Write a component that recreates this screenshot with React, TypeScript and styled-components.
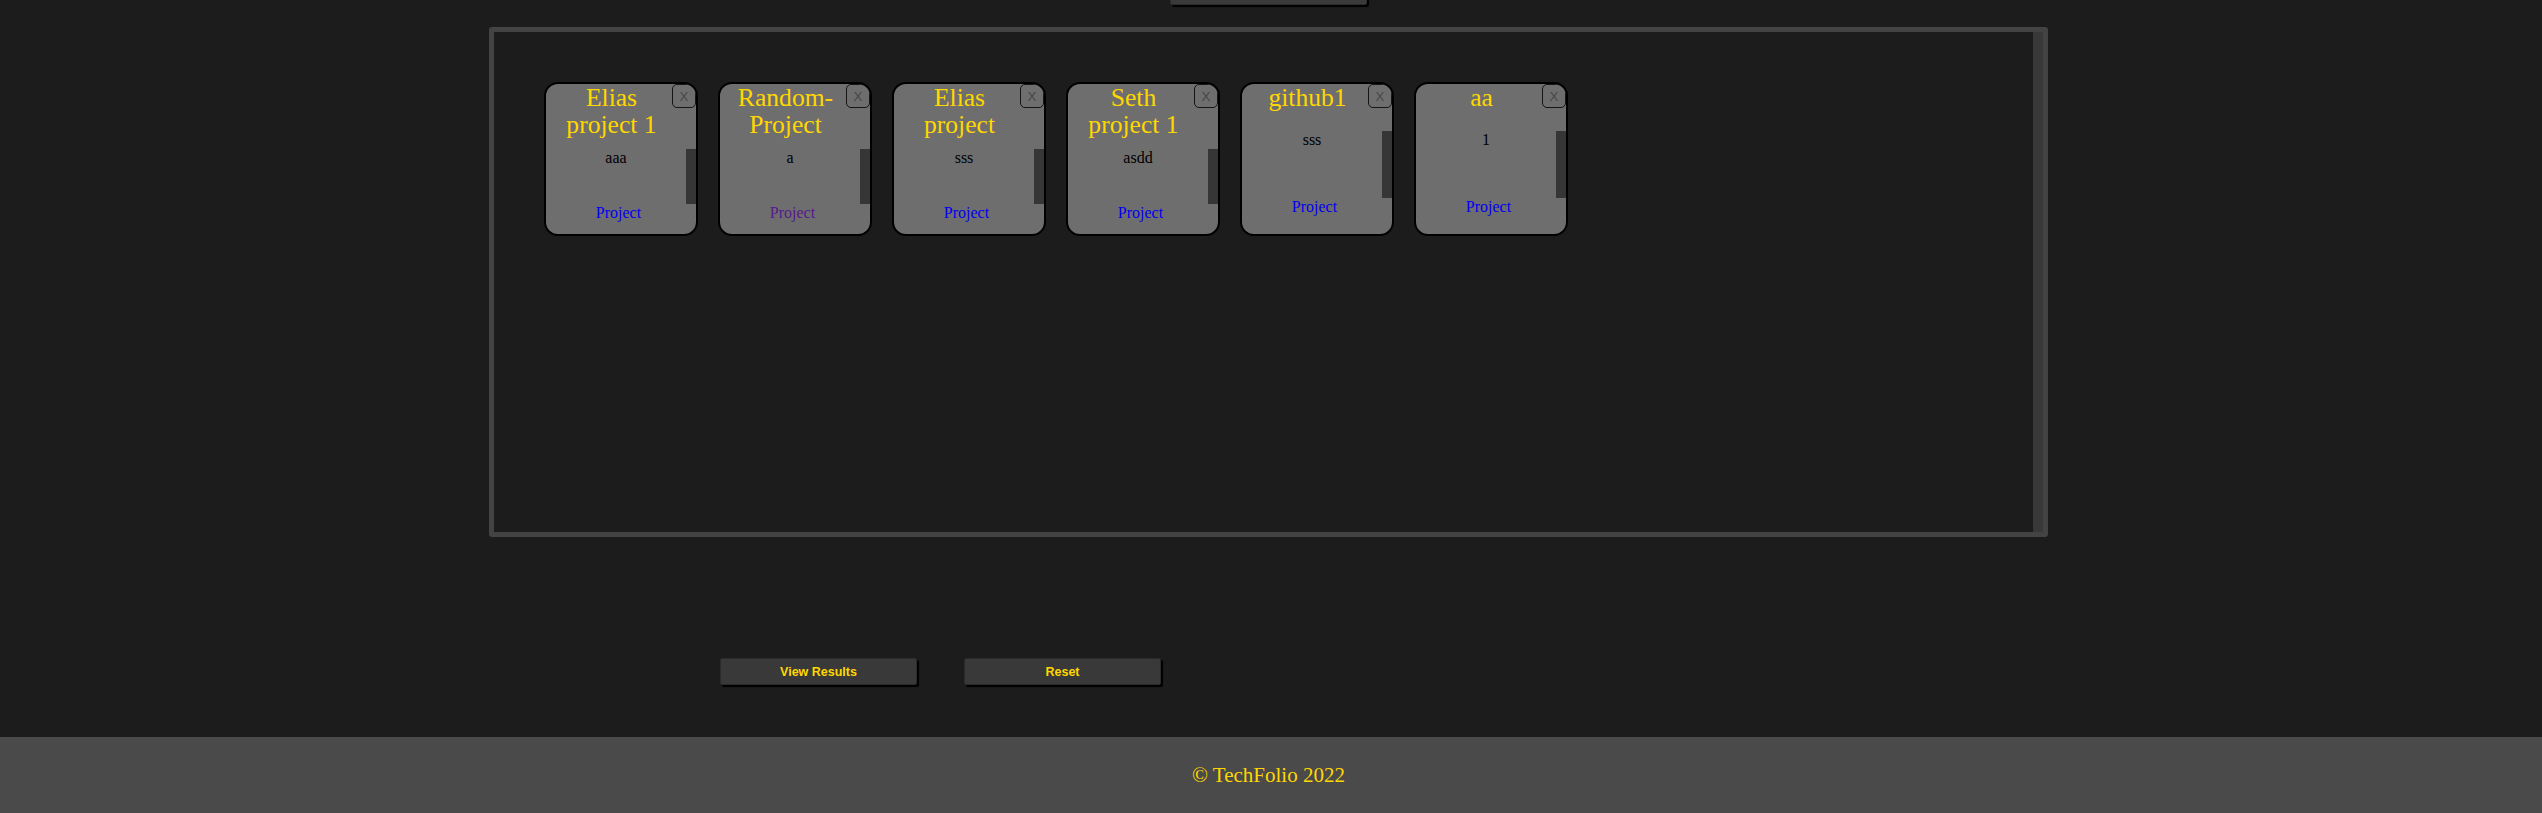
import styled, { createGlobalStyle } from 'styled-components';

interface ProjectData {
  id: number;
  title: string;
  description: string;
  visited?: boolean;
}

const projects: Array<ProjectData> = [
  { id: 1, title: 'Elias project 1', description: 'aaa' },
  { id: 2, title: 'Random-Project', description: 'a', visited: true },
  { id: 3, title: 'Elias project', description: 'sss' },
  { id: 4, title: 'Seth project 1', description: 'asdd' },
  { id: 5, title: 'github1', description: 'sss' },
  { id: 6, title: 'aa', description: '1' },
];

const GlobalStyle = createGlobalStyle`
  body {
    margin: 0;
    background: #1c1c1c;
    font-family: "Liberation Serif", "Times New Roman", serif;
  }
`;

function ProjectCard({ project }: { project: ProjectData }) {
  return (
    <Card>
      <CloseBtn>X</CloseBtn>
      <CardTitle>{project.title}</CardTitle>
      <CardDesc>{project.description}</CardDesc>
      <LinkRow>
        <ProjectLink href="#" $visited={project.visited}>
          Project
        </ProjectLink>
      </LinkRow>
    </Card>
  );
}

export default function App() {
  return (
    <>
      <GlobalStyle />
      <Page>
        <TopButton />
        <Board>
          {projects.map((el) => (
            <ProjectCard key={el.id} project={el} />
          ))}
        </Board>
        <Actions>
          <ActionButton>View Results</ActionButton>
          <ActionButton>Reset</ActionButton>
        </Actions>
      </Page>
      <Footer>© TechFolio 2022</Footer>
    </>
  );
}

const Page = styled.div`
  display: flex;
  flex-direction: column;
  align-items: center;
  padding-right: 5px;
`;

const TopButton = styled.button`
  width: 197px;
  height: 27px;
  margin-top: -22px;
  background: #3a3a3a;
  border: 1px solid #2b2b2b;
  border-radius: 2px;
  box-shadow: 2px 2px 1px #000;
`;

// scroll track drawn as an inset shadow, the headless browser hides real scrollbars
const Board = styled.div`
  box-sizing: border-box;
  width: 1559px;
  height: 510px;
  margin-top: 22px;
  padding: 40px;
  border: 5px solid #434343;
  border-radius: 3px;
  box-shadow: inset -10px 0 0 #383838;
  display: flex;
  flex-wrap: wrap;
  align-content: flex-start;
  overflow-y: auto;
`;

const Card = styled.div`
  position: relative;
  width: 150px;
  height: 150px;
  margin: 10px;
  border: 2px solid #000;
  border-radius: 14px;
  background: #6e6e6e;
  display: flex;
  flex-direction: column;
  overflow: hidden;
`;

const CloseBtn = styled.button`
  position: absolute;
  top: 0;
  right: 0;
  width: 24px;
  height: 24px;
  padding: 0;
  border: 1px solid #151515;
  border-radius: 5px;
  background: transparent;
  color: #474747;
  font-family: "Liberation Sans", Arial, sans-serif;
  font-size: 13.33px;
`;

const CardTitle = styled.h2`
  flex: 4 0 auto;
  margin: 0;
  padding: 0 34px 11px 15px;
  font-size: 25.6px;
  font-weight: normal;
  line-height: 27px;
  color: #ffd700;
  text-align: center;
`;

const CardDesc = styled.p`
  flex: 6 0 55px;
  margin: 0;
  overflow-y: auto;
  border-right: 10px solid #363636;
  font-size: 16px;
  color: #000;
  text-align: center;
`;

const LinkRow = styled.div`
  flex: 3 0 auto;
  padding: 0 5px 11px 0;
  font-size: 16px;
  line-height: 1.15;
  text-align: center;
`;

const ProjectLink = styled.a<{ $visited?: boolean }>`
  color: ${(p) => (p.$visited ? '#551a8b' : '#0000ee')};
  text-decoration: none;
`;

const Actions = styled.div`
  align-self: flex-start;
  display: flex;
  gap: 47px;
  margin: 121px 0 0 720px;
`;

const ActionButton = styled.button`
  width: 197px;
  height: 27px;
  background: #393939;
  border: 1px solid #2b2b2b;
  border-radius: 2px;
  box-shadow: 2px 2px 1px #000;
  color: #ffd700;
  font-family: "Liberation Sans", Arial, sans-serif;
  font-size: 12.5px;
  font-weight: bold;
`;

const Footer = styled.footer`
  height: 76px;
  margin-top: 52px;
  padding-right: 5px;
  background: #4a4a4a;
  display: flex;
  align-items: center;
  justify-content: center;
  color: #ffd700;
  font-size: 21px;
`;
